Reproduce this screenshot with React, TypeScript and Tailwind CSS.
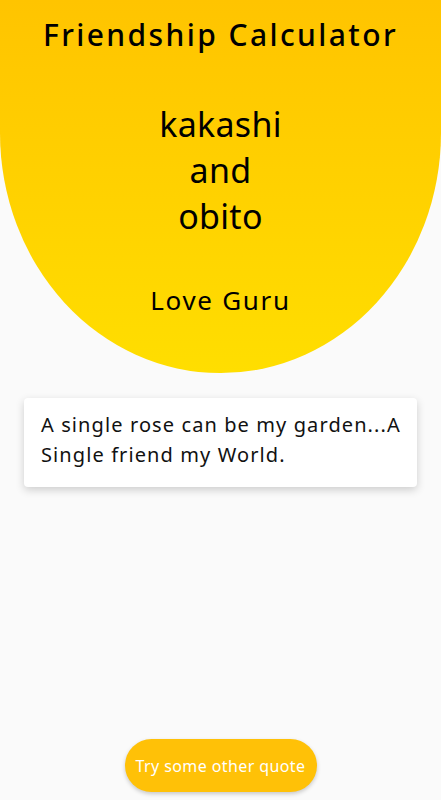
import React from "react";

const quote = "A single rose can be my garden...A Single friend my World.";

export default function App() {
  return (
    <div
      className="min-h-[800px] w-full bg-[#fafafa] flex flex-col items-center"
      style={{ fontFamily: '"Noto Sans", "Open Sans", sans-serif' }}
    >
      {/* Header blob */}
      <div className="w-full h-[373px] bg-gradient-to-b from-[#ffc400] to-[#ffde00] rounded-bl-[220px_240px] rounded-br-[220px_240px] flex flex-col items-center text-black">
        <h1 className="mt-[14px] text-[30px] leading-[42px] font-medium tracking-[2.4px]">
          Friendship Calculator
        </h1>
        <div className="mt-[45px] flex flex-col items-center text-[34px] leading-[46px] tracking-[0.3px]">
          <span>kakashi</span>
          <span>and</span>
          <span>obito</span>
        </div>
        <p className="mt-[44px] text-[26px] leading-[34px] tracking-[1.7px]">Love Guru</p>
      </div>

      {/* Quote card */}
      <div className="mt-[25px] w-[393px] bg-white rounded-[4px] shadow-[0_3px_8px_rgba(0,0,0,0.18)] pl-[17px] pr-[6px] pt-[12px] pb-[17px]">
        <p className="text-[20px] leading-[30px] text-[#111] tracking-[1.1px]">{quote}</p>
      </div>

      <div className="flex-1" />

      <button
        type="button"
        className="mb-[8px] w-[192px] h-[53px] rounded-full bg-[#ffc107] text-white text-[16px] tracking-[0.4px] shadow-[0_2px_4px_rgba(0,0,0,0.2)]"
      >
        Try some other quote
      </button>
    </div>
  );
}
